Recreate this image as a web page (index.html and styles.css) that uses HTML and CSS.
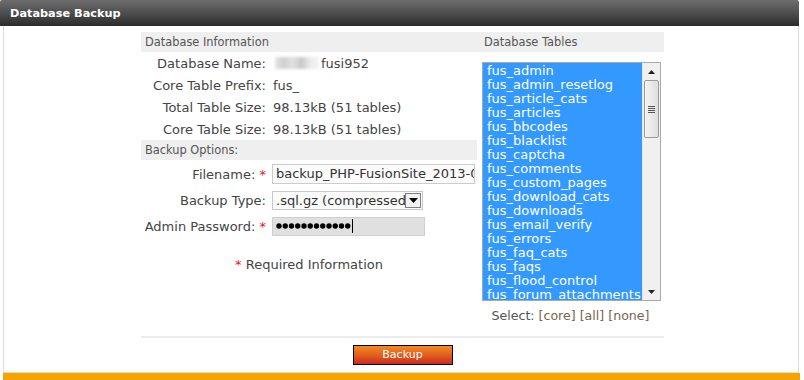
FILE: index.html
```html
<!DOCTYPE html>
<html>
<head>
<meta charset="utf-8">
<link rel="stylesheet" href="styles.css">
</head>
<body>
<div class="panel">
  <div class="title">Database Backup</div>
  <div class="body">
    <div class="form">
      <div class="cols">
        <div class="left">
          <div class="hd">Database Information</div>
          <div class="row info"><div class="lbl">Database Name:</div><div class="val"><span class="blur"></span>fusi952</div></div>
          <div class="row info"><div class="lbl">Core Table Prefix:</div><div class="val">fus_</div></div>
          <div class="row info"><div class="lbl">Total Table Size:</div><div class="val">98.13kB (51 tables)</div></div>
          <div class="row info"><div class="lbl">Core Table Size:</div><div class="val">98.13kB (51 tables)</div></div>
          <div class="hd">Backup Options:</div>
          <div class="row opt r1"><div class="lbl">Filename: <span class="req">*</span></div><div class="val"><div class="textbox">backup_PHP-FusionSite_2013-05-24-1452.sql.gz</div></div></div>
          <div class="row opt r2"><div class="lbl">Backup Type:</div><div class="val"><div class="dropdown"><span class="dtext">.sql.gz (compressed)</span><span class="dbtn"><svg width="9" height="5" viewBox="0 0 9 5"><path d="M0 0h9L4.5 5z" fill="#000"/></svg></span></div></div></div>
          <div class="row opt r3"><div class="lbl">Admin Password: <span class="req">*</span></div><div class="val"><div class="pwbox"><svg width="75" height="8" viewBox="0 0 75 8"><g fill="#000"><circle cx="3" cy="4" r="2.7"/><circle cx="9.25" cy="4" r="2.7"/><circle cx="15.5" cy="4" r="2.7"/><circle cx="21.75" cy="4" r="2.7"/><circle cx="28" cy="4" r="2.7"/><circle cx="34.25" cy="4" r="2.7"/><circle cx="40.5" cy="4" r="2.7"/><circle cx="46.75" cy="4" r="2.7"/><circle cx="53" cy="4" r="2.7"/><circle cx="59.25" cy="4" r="2.7"/><circle cx="65.5" cy="4" r="2.7"/><circle cx="71.75" cy="4" r="2.7"/></g></svg><span class="caret"></span></div></div></div>
          <div class="reqinfo"><span class="req">*</span> Required Information</div>
        </div>
        <div class="right">
          <div class="hd hdr">Database Tables</div>
          <div class="listbox">
            <div class="items">
              <div>fus_admin</div>
              <div>fus_admin_resetlog</div>
              <div>fus_article_cats</div>
              <div>fus_articles</div>
              <div>fus_bbcodes</div>
              <div>fus_blacklist</div>
              <div>fus_captcha</div>
              <div>fus_comments</div>
              <div>fus_custom_pages</div>
              <div>fus_download_cats</div>
              <div>fus_downloads</div>
              <div>fus_email_verify</div>
              <div>fus_errors</div>
              <div>fus_faq_cats</div>
              <div>fus_faqs</div>
              <div>fus_flood_control</div>
              <div>fus_forum_attachments</div>
            </div>
            <div class="scroll">
              <div class="arrow up"><svg width="7" height="4" viewBox="0 0 7 4"><path d="M3.5 0L7 4H0z" fill="#222"/></svg></div>
              <div class="track">
                <div class="thumb"><span class="grip"></span><span class="grip"></span><span class="grip"></span><span class="grip"></span></div>
              </div>
              <div class="arrow down"><svg width="7" height="4" viewBox="0 0 7 4"><path d="M0 0h7L3.5 4z" fill="#222"/></svg></div>
            </div>
          </div>
          <div class="selectline">Select: <a>[core]</a> <a>[all]</a> <a>[none]</a></div>
        </div>
      </div>
      <div class="sep"></div>
      <div class="btnrow"><button class="btn">Backup</button></div>
    </div>
  </div>
  <div class="orange"></div>
</div>
</body>
</html>
```

FILE: styles.css
```css
html, body {
  margin: 0;
  padding: 0;
  background: #fff;
  overflow: hidden;
}
body {
  font-family: "DejaVu Sans", Verdana, sans-serif;
  font-size: 13px;
  color: #444;
}
.panel {
  width: 800px;
  height: 380px;
}
.title {
  width: 799px;
  height: 26px;
  box-sizing: border-box;
  background: linear-gradient(#6e6e6e, #2c2c2c);
  border-top-left-radius: 2px;
  border-top-right-radius: 2px;
  color: #fff;
  font-weight: bold;
  font-size: 11.3px;
  line-height: 27px;
  padding-left: 10px;
}
.body {
  margin-left: 3px;
  width: 796px;
  box-sizing: border-box;
  border-left: 1px solid #dcdcdc;
  border-right: 1px solid #dcdcdc;
  border-bottom: 1px solid #dcdcdc;
  padding: 6px 0 7px 0;
}
.orange {
  margin-left: 3px;
  width: 797px;
  height: 8px;
  background: #f5a500;
}
.form {
  margin-left: 137px;
  width: 523px;
}
.cols {
  display: grid;
  grid-template-columns: 336px 187px;
}
.hd {
  height: 20px;
  line-height: 20px;
  background: #efefef;
  font-size: 11.4px;
  color: #555;
  padding-left: 4px;
}
.hdr {
  padding-left: 7px;
}
.row {
  display: flex;
  align-items: center;
}
.row.info { height: 22px; }
.row.r1 { height: 28px; }
.row.r2 { height: 24px; }
.row.r3 { height: 28px; }
.lbl {
  width: 125px;
  text-align: right;
  white-space: nowrap;
  color: #444;
}
.val {
  padding-left: 7px;
  color: #444;
  white-space: nowrap;
  display: flex;
  align-items: center;
}
.row.opt .val {
  padding-left: 6px;
}
.blur {
  display: inline-block;
  width: 44px;
  height: 12px;
  margin: 0 2px 0 2px;
  background: linear-gradient(90deg, #e6e6e6, #cfcfcf 20%, #e2e2e2 40%, #c8c8c8 60%, #ececec 80%, #f4f4f4);
  filter: blur(1.5px);
}
.req {
  color: #e02020;
}
.textbox {
  width: 203px;
  height: 20px;
  box-sizing: border-box;
  border: 1px solid #cccccc;
  background: #fbfbfb;
  padding-left: 3px;
  line-height: 18px;
  overflow: hidden;
  white-space: nowrap;
  color: #333;
}
.dropdown {
  width: 151px;
  height: 19px;
  box-sizing: border-box;
  border: 1px solid #c8c8c8;
  background: #fbfbfb;
  display: flex;
  align-items: stretch;
  color: #333;
}
.dtext {
  flex: 1;
  overflow: hidden;
  white-space: nowrap;
  padding-left: 3px;
  line-height: 17px;
}
.dbtn {
  width: 16px;
  box-sizing: border-box;
  border: 1px solid #808080;
  background: #f2f2f2;
  margin: 1px 1px 0 0;
  height: 15px;
  display: flex;
  align-items: center;
  justify-content: center;
}
.pwbox {
  width: 153px;
  height: 19px;
  box-sizing: border-box;
  border: 1px solid #cfcfcf;
  background: #e0e0e0;
  display: flex;
  align-items: center;
  padding-left: 3px;
}
.caret {
  display: inline-block;
  width: 1px;
  height: 14px;
  background: #000;
  margin-left: 1px;
}
.reqinfo {
  margin-top: 12px;
  height: 26px;
  line-height: 26px;
  text-align: center;
  color: #444;
}
.listbox {
  margin: 10px 0 0 5px;
  width: 179px;
  height: 239px;
  box-sizing: border-box;
  border: 1px solid #a9a9a9;
  display: flex;
  overflow: hidden;
}
.items {
  flex: 1;
  background: #3399ff;
  color: #fff;
  padding: 1px 0 0 4px;
  line-height: 14px;
  overflow: hidden;
  white-space: nowrap;
}
.scroll {
  width: 17px;
  background: #f0f0f0;
  border-left: 1px solid #e6e6e6;
  display: flex;
  flex-direction: column;
}
.arrow {
  height: 17px;
  display: flex;
  align-items: center;
  justify-content: center;
}
.track {
  flex: 1;
  padding: 0 1px;
}
.thumb {
  height: 58px;
  box-sizing: border-box;
  border: 1px solid #9a9a9a;
  border-radius: 2px;
  background: linear-gradient(90deg, #f4f4f4, #dedede);
  display: flex;
  flex-direction: column;
  align-items: center;
  justify-content: center;
  gap: 1px;
}
.grip {
  display: block;
  width: 7px;
  height: 1px;
  background: #555;
}
.selectline {
  margin-top: 5px;
  height: 20px;
  line-height: 20px;
  text-align: center;
  color: #555;
  font-size: 12.6px;
}
.selectline a {
  color: #7a6450;
}
.sep {
  margin-top: 10px;
  height: 2px;
  background: #ececec;
}
.btnrow {
  margin-top: 7px;
  display: flex;
  justify-content: center;
}
.btn {
  width: 100px;
  height: 20px;
  border: 1px solid #000;
  background: linear-gradient(#f08a24, #e2601e 50%, #cc2a20);
  color: #fff;
  font-family: "DejaVu Sans", Verdana, sans-serif;
  font-size: 11px;
  padding: 0;
  margin: 0;
  line-height: 18px;
}
```
